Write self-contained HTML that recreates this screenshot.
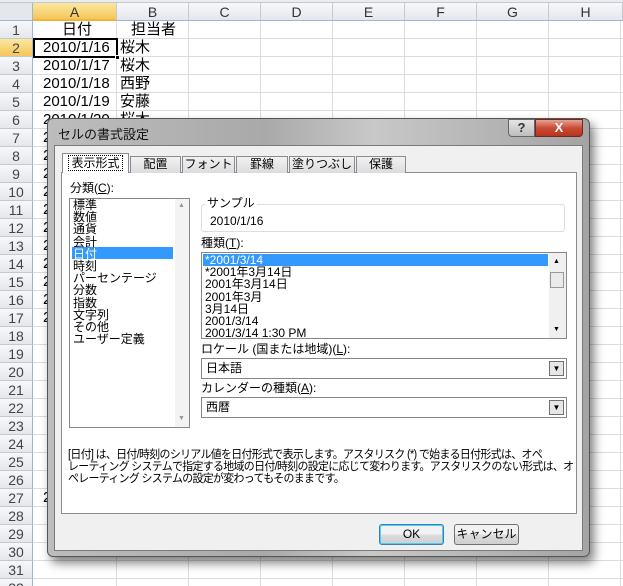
<!DOCTYPE html>
<html><head><meta charset="utf-8"><style>
*{margin:0;padding:0;box-sizing:border-box}
html,body{width:623px;height:586px;overflow:hidden}
body{background:#fff;font-family:"Liberation Sans","Noto Sans CJK JP",sans-serif;position:relative}
.abs{position:absolute}
.ch{position:absolute;top:3px;height:18px;background:linear-gradient(#f7f8fa,#e4e7ec);border-right:1px solid #c5c9cf;border-bottom:1px solid #9eb6ce;font-size:14px;color:#333;text-align:center;line-height:18px}
.rh{position:absolute;left:0;width:33px;height:18px;background:linear-gradient(#f7f8fa,#e4e7ec);border-right:1px solid #9eb6ce;border-bottom:1px solid #c5c9cf;font-size:14px;color:#444;text-align:center;line-height:18px}
.hl{position:absolute;left:33px;width:590px;height:1px;background:#dadcdd}
.vl{position:absolute;top:21px;width:1px;height:565px;background:#dadcdd}
.cell{position:absolute;font-size:15px;line-height:18px;color:#000}
.tab{position:absolute;top:156px;height:17px;border:1px solid #898c95;border-bottom:none;background:linear-gradient(#f2f2f2,#dcdcdc);font-size:12px;text-align:center;line-height:15px}
.lb{font-size:12px;position:absolute;line-height:12px}
.btn{position:absolute;top:524px;height:21px;border:1px solid #707070;border-radius:3px;background:linear-gradient(#f2f2f2 50%,#dddddd 50%,#cfcfcf);font-size:12px;text-align:center;line-height:19px}
</style></head><body>
<div class="abs" style="left:0;top:0;width:623px;height:3px;background:#e9ecf1;border-bottom:1px solid #c5c9cf"></div>
<div class="abs" style="left:0;top:3px;width:33px;height:18px;background:#e4e7ec;border-right:1px solid #9eb6ce;border-bottom:1px solid #9eb6ce"></div>
<div class="ch" style="left:33px;width:84px;background:linear-gradient(#fbe7a0,#f5c65a);border-bottom:2px solid #f1b438">A</div>
<div class="ch" style="left:117px;width:72px">B</div>
<div class="ch" style="left:189px;width:72px">C</div>
<div class="ch" style="left:261px;width:72px">D</div>
<div class="ch" style="left:333px;width:72px">E</div>
<div class="ch" style="left:405px;width:72px">F</div>
<div class="ch" style="left:477px;width:72px">G</div>
<div class="ch" style="left:549px;width:74px">H</div>
<div id="rows"></div>
<div class="vl" style="left:116px"></div><div class="vl" style="left:188px"></div><div class="vl" style="left:260px"></div><div class="vl" style="left:332px"></div><div class="vl" style="left:404px"></div><div class="vl" style="left:476px"></div><div class="vl" style="left:548px"></div><div class="vl" style="left:620px"></div>
<script>
var h='';for(var i=1;i<=32;i++){var t=21+(i-1)*18;h+='<div class="rh" style="top:'+t+'px;'+(i==2?'background:linear-gradient(#fbe7a0,#f5c65a);':'')+'">'+i+'</div><div class="hl" style="top:'+(t+17)+'px"></div>';}
document.getElementById('rows').innerHTML=h;
</script>
<div class="cell" style="left:62px;top:21px">日付</div>
<div class="cell" style="left:131px;top:21px">担当者</div>
<div class="cell" style="left:43px;top:39px">2010/1/16</div><div class="cell" style="left:120px;top:39px">桜木</div>
<div class="cell" style="left:43px;top:57px">2010/1/17</div><div class="cell" style="left:120px;top:57px">桜木</div>
<div class="cell" style="left:43px;top:75px">2010/1/18</div><div class="cell" style="left:120px;top:75px">西野</div>
<div class="cell" style="left:43px;top:93px">2010/1/19</div><div class="cell" style="left:120px;top:93px">安藤</div>
<div class="cell" style="left:43px;top:111px">2010/1/20</div><div class="cell" style="left:120px;top:111px">桜木</div>
<div class="abs" style="left:33px;top:38px;width:85px;height:20px;border:2px solid #000"></div>
<div class="abs" style="left:115px;top:55px;width:5px;height:5px;background:#000;border:1px solid #fff"></div>
<script>
var s='';[7,8,9,10,11,12,13,14,15,16,17,27].forEach(function(r){s+='<div class="cell" style="left:43px;top:'+(21+(r-1)*18)+'px">2</div>'});document.write(s);
</script>
<div class="abs" style="left:47px;top:118px;width:543px;height:439px;border:1px solid #555;border-radius:6px;background:linear-gradient(90deg,#bdbdbd,#a9a9a9 40%,#c8c8c8 60%,#a4a4a4);box-shadow:4px 6px 10px rgba(0,0,0,0.5)"></div>
<div class="abs" style="left:58px;top:124px;font-size:13px;color:#111">セルの書式設定</div>
<div class="abs" style="left:508px;top:119px;width:27px;height:18px;border:1px solid #666;border-radius:0 0 0 4px;background:linear-gradient(#e5e5e5,#bdbdbd);font-size:13px;text-align:center;line-height:16px;color:#333;font-weight:bold">?</div>
<div class="abs" style="left:535px;top:119px;width:48px;height:18px;border:1px solid #6a2b20;border-radius:0 0 4px 0;background:linear-gradient(#e8a293,#c94c34 50%,#b8331d);font-size:13px;text-align:center;line-height:16px;color:#fff;font-weight:bold">X</div>
<div class="abs" style="left:54px;top:145px;width:529px;height:406px;background:#f0f0f0;border:1px solid #7a7a7a"></div>
<div class="abs" style="left:61px;top:172px;width:516px;height:342px;background:#fff;border:1px solid #898c95"></div>
<div class="tab" style="left:62px;top:153px;width:67px;height:20px;background:#fff;line-height:18px"><span style="border:1px dotted #000;padding:0 2px">表示形式</span></div>
<div class="tab" style="left:130px;width:51px">配置</div>
<div class="tab" style="left:182px;width:53px">フォント</div>
<div class="tab" style="left:236px;width:52px">罫線</div>
<div class="tab" style="left:289px;width:66px">塗りつぶし</div>
<div class="tab" style="left:356px;width:50px">保護</div>
<div class="lb" style="left:70px;top:182px">分類(<u>C</u>):</div>
<div class="abs" style="left:69px;top:198px;width:121px;height:230px;border:1px solid #828790;background:#fff"></div>
<div class="abs" style="left:175px;top:199px;width:14px;height:228px;background:#f3f3f3"></div>
<div class="abs" style="left:178px;top:202px;font-size:7px;color:#999">▲</div>
<div class="abs" style="left:178px;top:415px;font-size:7px;color:#999">▼</div>
<div class="abs" style="left:72px;top:247px;width:101px;height:12px;background:#3399ff"></div>
<div class="abs" style="left:73px;top:199px;font-size:12px;line-height:12.2px">標準<br>数値<br>通貨<br>会計<br><span style="color:#fff">日付</span><br>時刻<br>パーセンテージ<br>分数<br>指数<br>文字列<br>その他<br>ユーザー定義</div>
<div class="abs" style="left:201px;top:204px;width:364px;height:28px;border:1px solid #d5dfe5;border-radius:3px"></div>
<div class="lb" style="left:205px;top:197px;background:#fff;padding:0 2px">サンプル</div>
<div class="lb" style="left:210px;top:215px">2010/1/16</div>
<div class="lb" style="left:201px;top:237px">種類(<u>T</u>):</div>
<div class="abs" style="left:201px;top:252px;width:366px;height:87px;border:1px solid #828790;background:#fff"></div>
<div class="abs" style="left:549px;top:253px;width:17px;height:85px;background:#f0f0f0"></div>
<div class="abs" style="left:550px;top:272px;width:14px;height:16px;border:1px solid #999;background:#eaeaea"></div>
<div class="abs" style="left:553px;top:258px;font-size:7px">▲</div>
<div class="abs" style="left:553px;top:326px;font-size:7px">▼</div>
<div class="abs" style="left:203px;top:254px;width:345px;height:12px;background:#3399ff"></div>
<div class="abs" style="left:205px;top:254px;font-size:12px;line-height:12.2px"><span style="color:#fff">*2001/3/14</span><br>*2001年3月14日<br>2001年3月14日<br>2001年3月<br>3月14日<br>2001/3/14<br>2001/3/14 1:30 PM</div>
<div class="lb" style="left:201px;top:343px">ロケール (国または地域)(<u>L</u>):</div>
<div class="abs" style="left:201px;top:358px;width:366px;height:21px;border:1px solid #828790;background:#fff;font-size:12px;line-height:19px;padding-left:4px">日本語</div>
<div class="abs" style="left:549px;top:361px;width:15px;height:15px;border:1px solid #707070;background:#e6e6e6;font-size:8px;text-align:center;line-height:13px">▼</div>
<div class="lb" style="left:201px;top:382px">カレンダーの種類(<u>A</u>):</div>
<div class="abs" style="left:201px;top:397px;width:366px;height:21px;border:1px solid #828790;background:#fff;font-size:12px;line-height:19px;padding-left:4px">西暦</div>
<div class="abs" style="left:549px;top:400px;width:15px;height:15px;border:1px solid #707070;background:#e6e6e6;font-size:8px;text-align:center;line-height:13px">▼</div>
<div class="abs" style="left:68px;top:449px;font-size:11.5px;line-height:12px;letter-spacing:-0.7px;white-space:nowrap;transform:scaleX(0.95);transform-origin:0 0">[日付] は、日付/時刻のシリアル値を日付形式で表示します。アスタリスク (*) で始まる日付形式は、オペ<br>レーティング システムで指定する地域の日付/時刻の設定に応じて変わります。アスタリスクのない形式は、オ<br>ペレーティング システムの設定が変わってもそのままです。</div>
<div class="btn" style="left:379px;width:65px;border-color:#3c7fb1;box-shadow:inset 0 0 0 1px #48d0fb">OK</div>
<div class="btn" style="left:454px;width:65px">キャンセル</div>
</body></html>
